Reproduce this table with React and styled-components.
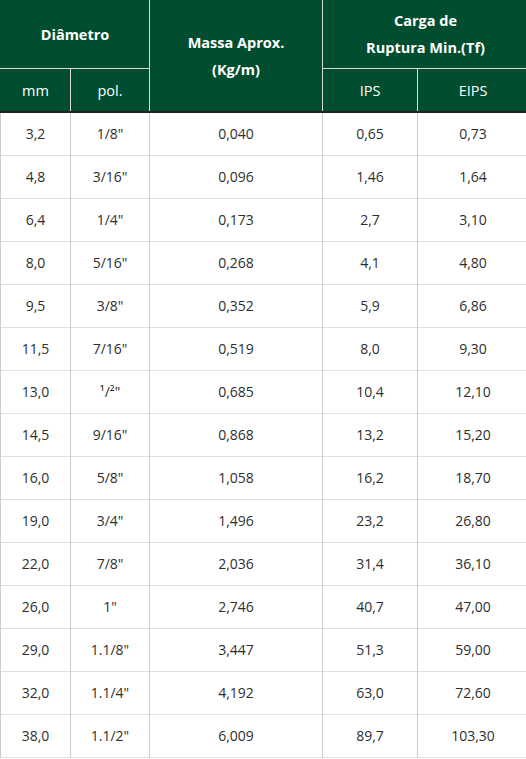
import React from "react";
import styled, { createGlobalStyle } from "styled-components";

const GlobalStyle = createGlobalStyle`
  html, body {
    margin: 0;
    padding: 0;
    background: #ffffff;
    overflow: hidden;
  }
  body {
    font-family: "Open Sans", "Noto Sans", sans-serif;
  }
`;

const green = "#014d2f";

const Table = styled.table`
  width: 528px;
  border-collapse: collapse;
  table-layout: fixed;
  font-family: "Open Sans", "Noto Sans", sans-serif;
  color: #2e2e2e;
`;

const Head = styled.thead`
  background: ${green};
  color: #ffffff;
  border-bottom: 2px solid #222222;
`;

const Th = styled.th`
  font-weight: ${({ $light }) => ($light ? 400 : 700)};
  font-size: 14.5px;
  line-height: 27px;
  text-align: center;
  vertical-align: middle;
  border: 1px solid #d9d9d9;
  border-top: none;
  height: ${({ $h }) => $h || 42}px;
  padding: 0 4px;
  &:first-child {
    border-left: 1px solid ${green};
  }
`;

const Row = styled.tr`
  height: 43px;
  border-bottom: 1px solid #e0e0e0;
`;

const Td = styled.td`
  font-size: 14px;
  text-align: center;
  vertical-align: middle;
  border-left: 1px solid #cccccc;
  border-right: 1px solid #cccccc;
  padding: 0;
`;

const rows = [
  ["3,2", "1/8\"", "0,040", "0,65", "0,73"],
  ["4,8", "3/16\"", "0,096", "1,46", "1,64"],
  ["6,4", "1/4\"", "0,173", "2,7", "3,10"],
  ["8,0", "5/16\"", "0,268", "4,1", "4,80"],
  ["9,5", "3/8\"", "0,352", "5,9", "6,86"],
  ["11,5", "7/16\"", "0,519", "8,0", "9,30"],
  ["13,0", "¹/²\"", "0,685", "10,4", "12,10"],
  ["14,5", "9/16\"", "0,868", "13,2", "15,20"],
  ["16,0", "5/8\"", "1,058", "16,2", "18,70"],
  ["19,0", "3/4\"", "1,496", "23,2", "26,80"],
  ["22,0", "7/8\"", "2,036", "31,4", "36,10"],
  ["26,0", "1\"", "2,746", "40,7", "47,00"],
  ["29,0", "1.1/8\"", "3,447", "51,3", "59,00"],
  ["32,0", "1.1/4\"", "4,192", "63,0", "72,60"],
  ["38,0", "1.1/2\"", "6,009", "89,7", "103,30"],
];

export default function App() {
  return (
    <>
      <GlobalStyle />
      <Table>
        <colgroup>
          <col style={{ width: 70 }} />
          <col style={{ width: 79 }} />
          <col style={{ width: 173 }} />
          <col style={{ width: 95 }} />
          <col style={{ width: 111 }} />
        </colgroup>
        <Head>
          <tr>
            <Th colSpan={2} $h={68}>Diâmetro</Th>
            <Th rowSpan={2}>
              Massa Aprox.
              <br />
              (Kg/m)
            </Th>
            <Th colSpan={2} $h={68}>
              Carga de
              <br />
              Ruptura Min.(Tf)
            </Th>
          </tr>
          <tr>
            <Th $light>mm</Th>
            <Th $light>pol.</Th>
            <Th $light>IPS</Th>
            <Th $light>EIPS</Th>
          </tr>
        </Head>
        <tbody>
          {rows.map((r) => (
            <Row key={r[0]}>
              {r.map((v, i) => (
                <Td key={i}>{v}</Td>
              ))}
            </Row>
          ))}
        </tbody>
      </Table>
    </>
  );
}
